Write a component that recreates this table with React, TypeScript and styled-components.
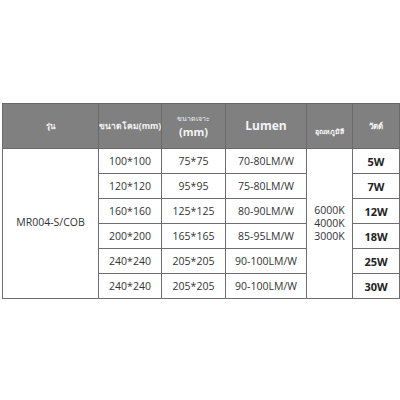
import React from "react";
import styled, { createGlobalStyle } from "styled-components";

const Global = createGlobalStyle`
  html, body { margin: 0; padding: 0; background: #fff; }
  body { font-family: "Open Sans", "Noto Sans", sans-serif; }
`;

const Page = styled.div`
  width: 400px;
  height: 400px;
  padding: 103px 1px 0 2px;
  box-sizing: border-box;
  background: #fff;
`;

const Table = styled.table`
  border-collapse: collapse;
  table-layout: fixed;
  width: 397px;
  color: #333;
  font-size: 10.5px;
`;

const HeadCell = styled.th`
  background: #808080;
  color: #f4f4f4;
  border: 1px solid #6a6a6a;
  padding: 0;
  font-weight: bold;
  text-align: center;
  vertical-align: middle;
`;

const HeadInner = styled.div<{ $size?: number; $pad?: number }>`
  height: 44px;
  box-sizing: border-box;
  padding-top: ${(p) => p.$pad ?? 0}px;
  display: flex;
  flex-direction: column;
  align-items: center;
  justify-content: center;
  overflow: hidden;
  white-space: nowrap;
  font-size: ${(p) => p.$size ?? 10}px;
  line-height: 14px;
`;

const Small = styled.div`
  font-size: 7px;
  font-weight: normal;
  line-height: 12px;
  height: 12px;
`;

const Cell = styled.td<{ $bold?: boolean }>`
  border: 1px solid #6e6e6e;
  height: 24px;
  padding: 0;
  text-align: center;
  vertical-align: middle;
  white-space: nowrap;
  font-weight: ${(p) => (p.$bold ? 700 : 400)};
  font-size: ${(p) => (p.$bold ? 11 : 10.5)}px;
  color: ${(p) => (p.$bold ? "#222" : "#333")};
`;

const ModelCell = styled(Cell)`
  padding-bottom: 4px;
  font-size: 10.5px;
`;

const TempCell = styled(Cell)`
  font-size: 10.5px;
  line-height: 13px;
`;

const rows = [
  ["100*100", "75*75", "70-80LM/W", "5W"],
  ["120*120", "95*95", "75-80LM/W", "7W"],
  ["160*160", "125*125", "80-90LM/W", "12W"],
  ["200*200", "165*165", "85-95LM/W", "18W"],
  ["240*240", "205*205", "90-100LM/W", "25W"],
  ["240*240", "205*205", "90-100LM/W", "30W"],
];

export default function App() {
  return (
    <Page>
      <Global />
      <Table>
        <colgroup>
          <col style={{ width: 96 }} />
          <col style={{ width: 63 }} />
          <col style={{ width: 64 }} />
          <col style={{ width: 81 }} />
          <col style={{ width: 46 }} />
          <col style={{ width: 47 }} />
        </colgroup>
        <thead>
          <tr>
            <HeadCell>
              <HeadInner $size={8}>รุ่น</HeadInner>
            </HeadCell>
            <HeadCell>
              <HeadInner $size={8.5}>ขนาดโคม(mm)</HeadInner>
            </HeadCell>
            <HeadCell>
              <HeadInner $size={11}>
                <Small>ขนาดเจาะ</Small>
                (mm)
              </HeadInner>
            </HeadCell>
            <HeadCell>
              <HeadInner $size={12}>Lumen</HeadInner>
            </HeadCell>
            <HeadCell>
              <HeadInner $size={7} $pad={12}>อุณหภูมิสี</HeadInner>
            </HeadCell>
            <HeadCell>
              <HeadInner $size={8}>วัตต์</HeadInner>
            </HeadCell>
          </tr>
        </thead>
        <tbody>
          {rows.map((r, i) => (
            <tr key={i}>
              {i === 0 && <ModelCell rowSpan={6}>MR004-S/COB</ModelCell>}
              <Cell>{r[0]}</Cell>
              <Cell>{r[1]}</Cell>
              <Cell>{r[2]}</Cell>
              {i === 0 && (
                <TempCell rowSpan={6}>
                  6000K
                  <br />
                  4000K
                  <br />
                  3000K
                </TempCell>
              )}
              <Cell $bold>{r[3]}</Cell>
            </tr>
          ))}
        </tbody>
      </Table>
    </Page>
  );
}
